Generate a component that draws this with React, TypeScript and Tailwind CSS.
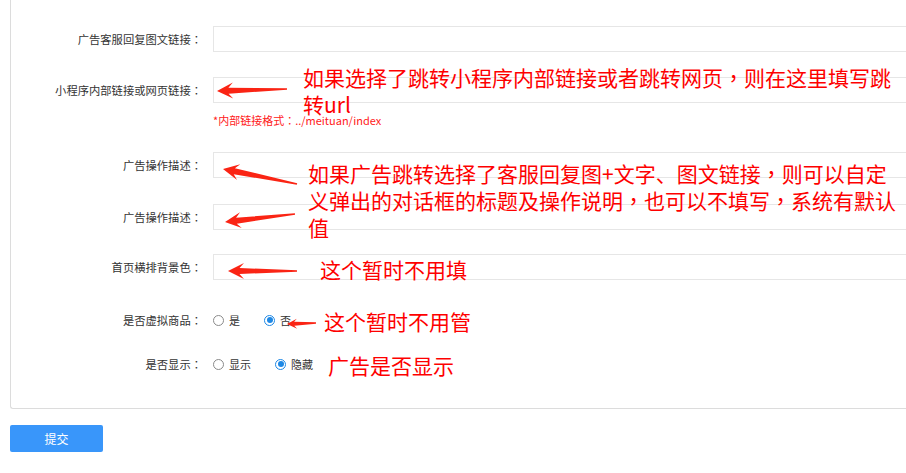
// Ad settings form with red annotation callouts.
import type { ReactNode } from 'react'

const FONT = '"Noto Sans CJK SC", "Noto Sans", sans-serif'

type ArrowSpec = {
  tip: [number, number]
  tail: [number, number]
  head?: number
  barb?: number
  shaft?: number
}

const arrows: ArrowSpec[] = [
  { tip: [217, 91], tail: [287, 89] },
  { tip: [223, 169], tail: [297, 184] },
  { tip: [225, 222], tail: [295, 214] },
  { tip: [228, 271], tail: [297, 271] },
  { tip: [287, 324], tail: [316, 323], head: 10, barb: 5, shaft: 2 },
]

function arrowPoints({ tip, tail, head = 16, barb = 8, shaft = 3 }: ArrowSpec) {
  const dx = tail[0] - tip[0]
  const dy = tail[1] - tip[1]
  const len = Math.hypot(dx, dy)
  const ux = dx / len
  const uy = dy / len
  const nx = -uy
  const ny = ux
  const at = (d: number, w: number) =>
    `${(tip[0] + ux * d + nx * w).toFixed(1)},${(tip[1] + uy * d + ny * w).toFixed(1)}`
  return [
    at(0, 0),
    at(head, barb),
    at(head * 0.72, shaft),
    at(len, 0.8),
    at(len, -0.8),
    at(head * 0.72, -shaft),
    at(head, -barb),
  ].join(' ')
}

// centred full-width punctuation (like YaHei) comes from the TC face
function P({ children }: { children: string }) {
  return <span className="font-['Noto_Sans_CJK_TC']">{children}</span>
}

function Row({
  label,
  children,
  className = '',
}: {
  label: string
  children: ReactNode
  className?: string
}) {
  return (
    <div className={`flex items-center h-[26px] ${className}`}>
      <div className="w-[191px] shrink-0 text-right text-[11.3px] text-[#333]">
        {label}
        <P>：</P>
      </div>
      <div className="ml-[11px] flex-1 flex items-center h-full">
        {children}
      </div>
    </div>
  )
}

function Input() {
  return <div className="h-[26px] flex-1 border border-[#e6e6e6] bg-white" />
}

function Radio({ checked, label }: { checked?: boolean; label: string }) {
  return (
    <label className="flex items-center mr-[24px] text-[11px] text-[#333]">
      <span
        className={`w-[11px] h-[11px] rounded-full border flex items-center justify-center ${
          checked ? 'border-[#1e88e5]' : 'border-[#8a8a8a]'
        }`}
      >
        {checked && <span className="w-[6px] h-[6px] rounded-full bg-[#1e88e5]" />}
      </span>
      <span className="ml-[5px]">{label}</span>
    </label>
  )
}

function Note({ className, children }: { className: string; children: ReactNode }) {
  return (
    <div
      className={`absolute whitespace-nowrap text-[21px] leading-[27px] text-[#fe0000] ${className}`}
    >
      {children}
    </div>
  )
}

export default function App() {
  return (
    <div
      className="relative w-[906px] h-[473px] overflow-hidden bg-white"
      style={{ fontFamily: FONT }}
    >
      {/* Form card */}
      <div className="ml-[10px] w-[940px] border-l border-b border-[#dcdcdc] rounded-bl-[3px] pt-[26px] pb-[31px]">
        <Row label="广告客服回复图文链接">
          <Input />
        </Row>
        <Row label="小程序内部链接或网页链接" className="mt-[25px]">
          <Input />
        </Row>
        <div className="ml-[202px] mt-[10px] text-[11px] leading-[14px] text-[#ff2020]">
          *内部链接格式<P>：</P>../meituan/index
        </div>
        <Row label="广告操作描述" className="mt-[25px]">
          <Input />
        </Row>
        <Row label="广告操作描述" className="mt-[26px]">
          <Input />
        </Row>
        <Row label="首页横排背景色" className="mt-[24px]">
          <Input />
        </Row>
        <Row label="是否虚拟商品" className="mt-[27px]">
          <Radio label="是" />
          <Radio label="否" checked />
        </Row>
        <Row label="是否显示" className="mt-[18px]">
          <Radio label="显示" />
          <Radio label="隐藏" checked />
        </Row>
      </div>

      <button
        type="button"
        className="ml-[10px] mt-[16px] w-[93px] h-[27px] rounded-[2px] bg-[#3996fa] text-white text-[12px]"
      >
        提交
      </button>

      {/* Annotations */}
      <svg className="absolute inset-0 pointer-events-none" width={906} height={473}>
        {arrows.map((a, i) => (
          <polygon key={i} points={arrowPoints(a)} fill="#fa2414" />
        ))}
      </svg>
      <Note className="left-[303px] top-[64px]">
        如果选择了跳转小程序内部链接或者跳转网页<P>，</P>则在这里填写跳
        <br />
        转url
      </Note>
      <Note className="left-[308px] top-[160px] leading-[27.5px]">
        如果广告跳转选择了客服回复图+文字、图文链接<P>，</P>则可以自定
        <br />
        义弹出的对话框的标题及操作说明<P>，</P>也可以不填写<P>，</P>系统有默认
        <br />
        值
      </Note>
      <Note className="left-[320px] top-[256px]">这个暂时不用填</Note>
      <Note className="left-[324px] top-[308px]">这个暂时不用管</Note>
      <Note className="left-[328px] top-[352px]">广告是否显示</Note>
    </div>
  )
}
